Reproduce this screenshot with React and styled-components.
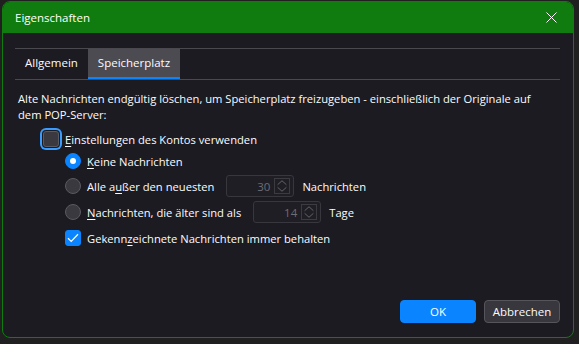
import styled, { createGlobalStyle } from "styled-components";

const GlobalStyle = createGlobalStyle`
  html, body {
    margin: 0;
    background: #202020;
  }
  body {
    font-family: "Open Sans", "Noto Sans", sans-serif;
    font-size: 11.2px;
    color: #fbfbfe;
  }
`;

export default function App() {
  return (
    <>
      <GlobalStyle />
      <Dialog>
        <TitleBar>
          <Title>Eigenschaften</Title>
          <CloseButton>
            <svg width="11" height="11" viewBox="0 0 11 11">
              <path d="M0.5 0.5 L10.5 10.5 M10.5 0.5 L0.5 10.5" stroke="#fff" strokeWidth="1" />
            </svg>
          </CloseButton>
        </TitleBar>

        <Body>
          <Tabs>
            <Tab>Allgemein</Tab>
            <Tab $active>Speicherplatz</Tab>
          </Tabs>

          <Description>
            Alte Nachrichten endgültig löschen, um Speicherplatz freizugeben - einschließlich der Originale auf
            dem POP-Server:
          </Description>

          <Options>
            <Row>
              <CheckBox $focus />
              <Label>
                <u>E</u>instellungen des Kontos verwenden
              </Label>
            </Row>

            <Group>
              <Row $compact>
                <Radio $checked />
                <Label>
                  <u>K</u>eine Nachrichten
                </Label>
              </Row>
              <Row>
                <Radio />
                <Label>
                  Alle a<u>u</u>ßer den neuesten
                </Label>
                <SpinBox value="30" />
                <Label>Nachrichten</Label>
              </Row>
              <Row>
                <Radio />
                <Label>
                  <u>N</u>achrichten, die älter sind als
                </Label>
                <SpinBox value="14" />
                <Label>Tage</Label>
              </Row>
              <Row>
                <CheckBox $checked>
                  <svg width="12" height="10" viewBox="0 0 12 10">
                    <path d="M1 5.2 L4.2 8.4 L11 1.2" fill="none" stroke="#fff" strokeWidth="1.3" />
                  </svg>
                </CheckBox>
                <Label>
                  Gekenn<u>z</u>eichnete Nachrichten immer behalten
                </Label>
              </Row>
            </Group>
          </Options>

          <Footer>
            <Button $primary>OK</Button>
            <Button>Abbrechen</Button>
          </Footer>
        </Body>
      </Dialog>
    </>
  );
}

function SpinBox({ value }) {
  return (
    <Spin>
      <SpinValue>{value}</SpinValue>
      <SpinArrows>
        <svg width="16" height="16" viewBox="0 0 16 16">
          <path d="M3 6.5 L8 2 L13 6.5" fill="none" stroke="#6e6d73" strokeWidth="1" />
          <path d="M3 9.5 L8 14 L13 9.5" fill="none" stroke="#6e6d73" strokeWidth="1" />
        </svg>
      </SpinArrows>
    </Spin>
  );
}

const Dialog = styled.div`
  margin: 1px 0 0 2px;
  width: 572px;
  height: 337px;
  box-sizing: border-box;
  border: 1px solid #107c10;
  border-radius: 8px;
  overflow: hidden;
  background: #1c1b22;
  display: flex;
  flex-direction: column;
`;

const TitleBar = styled.div`
  height: 31px;
  flex: none;
  background: #107c10;
  display: flex;
  align-items: center;
  justify-content: space-between;
  padding: 0 0 0 12px;
`;

const Title = styled.span`
  font-size: 11.5px;
  color: #ffffff;
  margin-top: -1px;
`;

const CloseButton = styled.span`
  width: 40px;
  height: 100%;
  display: flex;
  align-items: center;
  justify-content: center;
  margin-right: 2px;
`;

const Body = styled.div`
  flex: 1;
  display: flex;
  flex-direction: column;
  padding: 15px 13px 14px 12px;
`;

const Tabs = styled.div`
  display: flex;
  border-top: 1px solid #4a4950;
  border-bottom: 1px solid #4a4950;
  height: 30px;
`;

const Tab = styled.div`
  display: flex;
  align-items: center;
  padding: 0 10px 1px;
  box-sizing: border-box;
  font-size: 11.5px;
  background: ${(p) => (p.$active ? "#4c4b52" : "transparent")};
  border-bottom: 2px solid ${(p) => (p.$active ? "#0a84ff" : "transparent")};
  color: #fbfbfe;
`;

const Description = styled.p`
  margin: 11px 0 0 3px;
  max-width: 528px;
  line-height: 16px;
`;

const Options = styled.div`
  margin: 5px 0 0 26px;
  display: flex;
  flex-direction: column;
`;

const Group = styled.div`
  margin: 1px 0 0 24px;
  display: flex;
  flex-direction: column;
  gap: 4px;
`;

const Row = styled.div`
  display: flex;
  align-items: center;
  min-height: ${(p) => (p.$compact ? "20px" : "22px")};
  gap: 6px;
`;

const Label = styled.span`
  white-space: nowrap;
  u {
    text-underline-offset: 2px;
  }
`;

const CheckBox = styled.span`
  width: 16px;
  height: 16px;
  box-sizing: border-box;
  border-radius: 3px;
  display: flex;
  align-items: center;
  justify-content: center;
  flex: none;
  background: ${(p) => (p.$checked ? "#0a84ff" : "#3a393f")};
  border: 1px solid ${(p) => (p.$checked ? "#0a84ff" : "#5b5a60")};
  margin: 0 0 0 ${(p) => (p.$focus ? "2px" : "0")};
  box-shadow: ${(p) => (p.$focus ? "0 0 0 1px #1c1b22, 0 0 0 3px #3a9cff" : "none")};
`;

const Radio = styled.span`
  width: 16px;
  height: 16px;
  box-sizing: border-box;
  border-radius: 50%;
  flex: none;
  background: ${(p) => (p.$checked ? "#0a84ff" : "#3a393f")};
  border: 1px solid ${(p) => (p.$checked ? "#0a84ff" : "#5b5a60")};
  position: relative;

  &::after {
    content: "";
    display: ${(p) => (p.$checked ? "block" : "none")};
    position: absolute;
    left: 4px;
    top: 4px;
    width: 6px;
    height: 6px;
    border-radius: 50%;
    background: #fff;
  }
`;

const Spin = styled.span`
  width: 68px;
  height: 22px;
  box-sizing: border-box;
  border: 1px solid #38373d;
  border-radius: 3px;
  background: #1f1e25;
  display: flex;
  align-items: center;
  justify-content: flex-end;
  padding-right: 3px;
  margin: 0 2px 0 6px;
`;

const SpinValue = styled.span`
  color: #6e6d73;
  font-size: 11.5px;
  margin-right: 4px;
`;

const SpinArrows = styled.span`
  width: 16px;
  height: 16px;
  box-sizing: border-box;
  border: 1px solid #3c3b41;
  display: flex;
  align-items: center;
  justify-content: center;

  svg {
    width: 14px;
    height: 14px;
  }
`;

const Footer = styled.div`
  margin-top: auto;
  display: flex;
  justify-content: flex-end;
  gap: 8px;
`;

const Button = styled.button`
  width: 76px;
  height: 23px;
  box-sizing: border-box;
  border-radius: 4px;
  font-family: inherit;
  font-size: 11.5px;
  color: ${(p) => (p.$primary ? "#ffffff" : "#fbfbfe")};
  background: ${(p) => (p.$primary ? "#0a84ff" : "#38373e")};
  border: 1px solid ${(p) => (p.$primary ? "#0a84ff" : "#56555b")};
  padding: 0;
`;
